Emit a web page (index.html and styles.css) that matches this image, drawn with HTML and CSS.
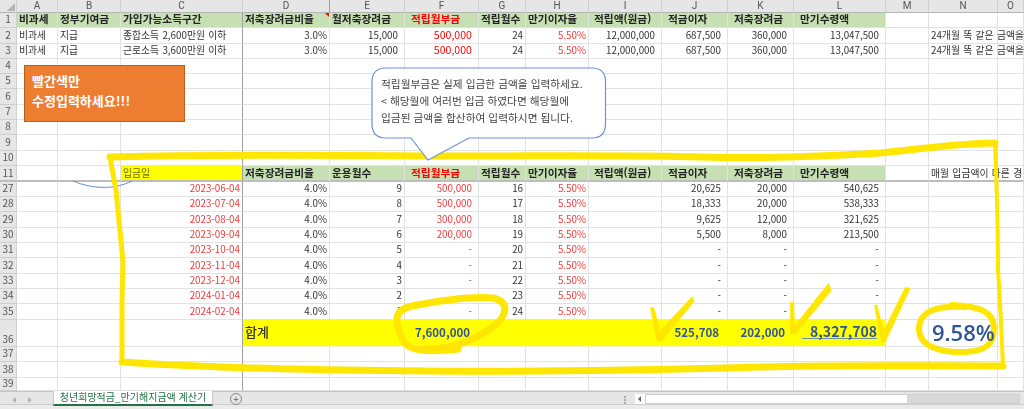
FILE: index.html
```html
<!DOCTYPE html>
<html lang="ko">
<head>
<meta charset="utf-8">
<title>청년희망적금 만기해지금액 계산기</title>
<link rel="stylesheet" href="styles.css">
</head>
<body>
<div class="app">
<div class="sheet">
<table class="grid">
<colgroup><col class="c0"><col class="ca"><col class="cb"><col class="cc"><col class="cd"><col class="ce"><col class="cf"><col class="cg"><col class="ch"><col class="ci"><col class="cj"><col class="ck"><col class="cl"><col class="cm"><col class="cn"><col class="co"></colgroup>
<thead>
<tr class="r13"><th class="corner"><span class="tri"></span></th><th>A</th><th>B</th><th>C</th><th class="fz">D</th><th>E</th><th>F</th><th>G</th><th>H</th><th>I</th><th>J</th><th>K</th><th>L</th><th>M</th><th>N</th><th>O</th></tr>
</thead>
<tbody>
<tr class="r15 g"><th>1</th><td class="h">비과세</td><td class="h">정부기여금</td><td class="h fz">가입가능소득구간</td><td class="h">저축장려금비율<span class="note"></span></td><td class="h">월저축장려금</td><td class="h i7 red">적립월부금</td><td class="h">적립월수</td><td class="h">만기이자율</td><td class="h i6">적립액(원금)</td><td class="h i7">적금이자</td><td class="h i7">저축장려금</td><td class="h i7">만기수령액</td><td class="w"></td><td class="w"></td><td class="w"></td></tr>
<tr class="r16"><th>2</th><td>비과세</td><td>지급</td><td class="fz">종합소득 2,600만원 이하</td><td class="p">3.0%</td><td class="n">15,000</td><td class="n red big">500,000</td><td class="p">24</td><td class="p pink">5.50%</td><td class="n">12,000,000</td><td class="n">687,500</td><td class="n">360,000</td><td class="n">13,047,500</td><td></td><td>24개월 똑 같은 금액을</td><td></td></tr>
<tr class="r15"><th>3</th><td>비과세</td><td>지급</td><td class="fz">근로소득 3,600만원 이하</td><td class="p">3.0%</td><td class="n">15,000</td><td class="n red big">500,000</td><td class="p">24</td><td class="p pink">5.50%</td><td class="n">12,000,000</td><td class="n">687,500</td><td class="n">360,000</td><td class="n">13,047,500</td><td></td><td>24개월 똑 같은 금액을</td><td></td></tr>
<tr class="r15"><th>4</th><td></td><td></td><td class="fz"></td><td></td><td></td><td></td><td></td><td></td><td></td><td></td><td></td><td></td><td></td><td></td><td></td></tr>
<tr class="r15"><th>5</th><td></td><td></td><td class="fz"></td><td></td><td></td><td></td><td></td><td></td><td></td><td></td><td></td><td></td><td></td><td></td><td></td></tr>
<tr class="r16"><th>6</th><td></td><td></td><td class="fz"></td><td></td><td></td><td></td><td></td><td></td><td></td><td></td><td></td><td></td><td></td><td></td><td></td></tr>
<tr class="r15"><th>7</th><td></td><td></td><td class="fz"></td><td></td><td></td><td></td><td></td><td></td><td></td><td></td><td></td><td></td><td></td><td></td><td></td></tr>
<tr class="r15"><th>8</th><td></td><td></td><td class="fz"></td><td></td><td></td><td></td><td></td><td></td><td></td><td></td><td></td><td></td><td></td><td></td><td></td></tr>
<tr class="r16"><th>9</th><td></td><td></td><td class="fz"></td><td></td><td></td><td></td><td></td><td></td><td></td><td></td><td></td><td></td><td></td><td></td><td></td></tr>
<tr class="r15"><th>10</th><td></td><td></td><td class="fz"></td><td></td><td></td><td></td><td></td><td></td><td></td><td></td><td></td><td></td><td></td><td></td><td></td></tr>
<tr class="r16 pane"><th>11</th><td></td><td></td><td class="y fz">입금일</td><td class="h">저축장려금비율</td><td class="h">운용월수</td><td class="h i7 red">적립월부금</td><td class="h">적립월수</td><td class="h">만기이자율</td><td class="h i6">적립액(원금)</td><td class="h i7">적금이자</td><td class="h i7">저축장려금</td><td class="h i7">만기수령액</td><td class="w"></td><td>매월 입금액이 다른 경</td><td></td></tr>
<tr class="r15"><th>27</th><td></td><td></td><td class="p pink fz">2023-06-04</td><td class="p">4.0%</td><td class="p">9</td><td class="n pink">500,000</td><td class="p">16</td><td class="p pink">5.50%</td><td></td><td class="n">20,625</td><td class="n">20,000</td><td class="n">540,625</td><td></td><td></td><td></td></tr>
<tr class="r15"><th>28</th><td></td><td></td><td class="p pink fz">2023-07-04</td><td class="p">4.0%</td><td class="p">8</td><td class="n pink">500,000</td><td class="p">17</td><td class="p pink">5.50%</td><td></td><td class="n">18,333</td><td class="n">20,000</td><td class="n">538,333</td><td></td><td></td><td></td></tr>
<tr class="r16"><th>29</th><td></td><td></td><td class="p pink fz">2023-08-04</td><td class="p">4.0%</td><td class="p">7</td><td class="n pink">300,000</td><td class="p">18</td><td class="p pink">5.50%</td><td></td><td class="n">9,625</td><td class="n">12,000</td><td class="n">321,625</td><td></td><td></td><td></td></tr>
<tr class="r15"><th>30</th><td></td><td></td><td class="p pink fz">2023-09-04</td><td class="p">4.0%</td><td class="p">6</td><td class="n pink">200,000</td><td class="p">19</td><td class="p pink">5.50%</td><td></td><td class="n">5,500</td><td class="n">8,000</td><td class="n">213,500</td><td></td><td></td><td></td></tr>
<tr class="r15"><th>31</th><td></td><td></td><td class="p pink fz">2023-10-04</td><td class="p">4.0%</td><td class="p">5</td><td class="n pink">-</td><td class="p">20</td><td class="p pink">5.50%</td><td></td><td class="n">-</td><td class="n">-</td><td class="n">-</td><td></td><td></td><td></td></tr>
<tr class="r16"><th>32</th><td></td><td></td><td class="p pink fz">2023-11-04</td><td class="p">4.0%</td><td class="p">4</td><td class="n pink">-</td><td class="p">21</td><td class="p pink">5.50%</td><td></td><td class="n">-</td><td class="n">-</td><td class="n">-</td><td></td><td></td><td></td></tr>
<tr class="r15"><th>33</th><td></td><td></td><td class="p pink fz">2023-12-04</td><td class="p">4.0%</td><td class="p">3</td><td class="n pink">-</td><td class="p">22</td><td class="p pink">5.50%</td><td></td><td class="n">-</td><td class="n">-</td><td class="n">-</td><td></td><td></td><td></td></tr>
<tr class="r15"><th>34</th><td></td><td></td><td class="p pink fz">2024-01-04</td><td class="p">4.0%</td><td class="p">2</td><td class="n pink">-</td><td class="p">23</td><td class="p pink">5.50%</td><td></td><td class="n">-</td><td class="n">-</td><td class="n">-</td><td></td><td></td><td></td></tr>
<tr class="r16"><th>35</th><td></td><td></td><td class="p pink fz">2024-02-04</td><td class="p">4.0%</td><td class="p">1</td><td class="n pink">-</td><td class="p">24</td><td class="p pink">5.50%</td><td></td><td class="n">-</td><td class="n">-</td><td class="n">-</td><td></td><td></td><td></td></tr>
<tr class="r27"><th class="low">36</th><td></td><td></td><td class="fz"></td><td class="t total-label">합계</td><td class="t"></td><td class="t total n8">7,600,000</td><td class="t"></td><td class="t"></td><td class="t"></td><td class="t total n8">525,708</td><td class="t total n8">202,000</td><td class="t total n9"><span class="acct">8,327,708</span></td><td></td><td></td><td></td></tr>
<tr class="r15"><th>37</th><td></td><td></td><td class="fz"></td><td></td><td></td><td></td><td></td><td></td><td></td><td></td><td></td><td></td><td></td><td></td><td></td></tr>
<tr class="r16"><th>38</th><td></td><td></td><td class="fz"></td><td></td><td></td><td></td><td></td><td></td><td></td><td></td><td></td><td></td><td></td><td></td><td></td></tr>
<tr class="r13"><th>39</th><td></td><td></td><td class="fz"></td><td></td><td></td><td></td><td></td><td></td><td></td><td></td><td></td><td></td><td></td><td></td><td></td></tr>
</tbody>
</table>

<svg class="ink" width="1024" height="391" viewBox="0 0 1024 391" aria-hidden="true">
<path class="arc" d="M73 181C92 189 114 190 132 181"/>
<path class="pen w5" d="M122 362L122 300L123 262L116 190L110 157"/>
<path class="pen w7" d="M110 157C200 155 330 155 428 156C560 156 640 155 700 157C770 159 830 156 880 153C920 149 960 143 995 143"/>
<path class="pen w4" d="M995 143C997 190 998 240 998 269C1000 300 1002 340 1003 366"/>
<path class="pen w7" d="M1003 366C920 366 840 365 760 367C650 370 540 372 430 371C330 370 230 369 122 362"/>
<path class="pen w7" d="M458 349C430 352 408 352 403 340C394 322 393 310 412 306C440 300 475 296 493 298C510 302 507 315 495 325C485 333 470 341 455 345C445 348 435 349 424 349"/>
<path class="stroke" d="M650.300 308L653.700 307.300L660.300 330.700L692 296.700L694.300 301.300L662 340.700L657 341.300Z"/>
<path class="stroke" d="M790.300 302.300L793.700 302.300L794.700 325.700L828.700 283L831.300 290.700L795.300 334L790.300 334.700Z"/>
<path class="stroke" d="M874.300 305L877 305L883.700 330.700L905.300 287.300L910.300 288.300L885.300 342.300L881.300 342.300Z"/>
<path class="pen w6" d="M965 307C935 305 919 312 919 329C919 346 940 353 965 352C985 351 994 345 994 328C994 312 980 306 952 305"/>
</svg>

<div class="orange">빨간색만<br>수정입력하세요!!!</div>

<div class="callout">
<svg class="callout-shape" width="240" height="96" viewBox="371 67 240 96" aria-hidden="true">
<path d="M386 68H592Q605.500 68 605.500 82V124Q605.500 138 592 138H469L428 160L411 138H386Q372 138 372 124V82Q372 68 386 68Z"/>
</svg>
<p class="callout-text">적립월부금은 실제 입금한 금액을 입력하세요.<br>&lt; 해당월에 여러번 입금 하였다면 해당월에<br>입금된 금액을 합산하여 입력하시면 됩니다.</p>
</div>

<div class="rate">9.58%</div>
</div>

<div class="tabbar">
<div class="tabrow">
<div class="navs"><span class="nav-l"></span><span class="nav-r"></span></div>
<div class="tab">청년희망적금_만기해지금액 계산기</div>
<div class="plus">+</div>
<div class="hscroll"><span class="dots"></span><span class="arrow"></span><span class="thumb"></span></div>
</div>
<div class="status"></div>
</div>
</div>
</body>
</html>
```
FILE: styles.css
```css
* { box-sizing: border-box; }
html, body { margin: 0; padding: 0; background: #fff; }
body { width: 1024px; height: 409px; overflow: hidden; font-family: "Noto Sans CJK KR", "Noto Sans", sans-serif; color: #333; }
.app { display: flex; flex-direction: column; height: 409px; filter: blur(0.35px); }
.sheet { position: relative; height: 391px; overflow: hidden; }

.grid { table-layout: fixed; width: 1024px; border-collapse: separate; border-spacing: 0; font-size: 9.8px; line-height: 12px; word-spacing: 0.6px; }
.c0 { width: 17px; } .ca { width: 41px; } .cb { width: 63px; } .cc { width: 122px; } .cd { width: 87px; }
.ce { width: 75px; } .cf { width: 74px; } .cg { width: 47px; } .ch { width: 63px; } .ci { width: 73px; }
.cj { width: 66px; } .ck { width: 66px; } .cl { width: 92px; } .cm { width: 43px; } .cn { width: 69px; } .co { width: 26px; }

.r13 td, .r13 th { height: 13px; } .r15 td, .r15 th { height: 15px; } .r16 td, .r16 th { height: 16px; } .r27 td, .r27 th { height: 27px; }

th { background: #e6e6e6; font-weight: 400; color: #555; font-size: 10px; line-height: 12px; padding: 0 0 2px; text-align: center; border-right: 1px solid #cfcfcf; border-bottom: 1px solid #cfcfcf; white-space: nowrap; }
td { padding: 0 0 2px 2px; border-right: 1px solid #e2e2e2; border-bottom: 1px solid #e2e2e2; white-space: nowrap; vertical-align: middle; }
thead th { border-bottom: 1px solid #b5b5b5; font-family: Roboto, "Noto Sans", sans-serif; line-height: 12px; padding: 0; }
.r13 td, tbody .r13 th { line-height: 10px; }
.corner { position: relative; }
.tri { position: absolute; right: 1px; bottom: 1px; border-style: solid; border-width: 0 0 8px 8px; border-color: transparent transparent #b4b4b4 transparent; }
th.low { vertical-align: bottom; padding-bottom: 1px; }

.fz { border-right: 1px solid #9f9f9f; }
.pane td, .pane th { border-bottom: 2px solid #bdbdbd; padding-bottom: 1px; }

.h { background: #c6e0b4; font-weight: 700; font-size: 10.7px; color: #222; position: relative; }
.y { background: #ffff00; color: #6b6b00; }
.w { background: #fff; }
.i6 { padding-left: 5px; }
.i7 { padding-left: 6px; }
.red { color: #ff0000; }
.big { font-size: 10.6px; }
.pink { color: #f03a3a; }
.p { text-align: right; padding-left: 0; padding-right: 2px; }
.n { text-align: right; padding-left: 0; padding-right: 6px; }
.n8, .n9 { text-align: right; padding-left: 0; padding-right: 8px; }
.note { position: absolute; top: 0; right: 0; border-style: solid; border-width: 0 4px 4px 0; border-color: transparent #ff0000 transparent transparent; }

.t { background: #ffff00; border-right-color: #ffff00; border-bottom-color: #f2f2d0; }
.total { color: #2f5597; font-weight: 700; font-size: 11.5px; }
.total-label { font-size: 13px; color: #333; font-weight: 500; }
.acct { display: inline-block; min-width: 75px; border-bottom: 1px solid #6f8f9f; line-height: 13px; font-size: 14px; }

.ink { position: absolute; left: 0; top: 0; pointer-events: none; }
.pen { fill: none; stroke: #ffe600; stroke-linecap: round; stroke-linejoin: round; }
.w4 { stroke-width: 4; }
.w5 { stroke-width: 5; }
.w6 { stroke-width: 6; }
.w7 { stroke-width: 7; }
.stroke { fill: #ffe600; stroke: #ffe600; stroke-width: 0.5; }
.arc { fill: none; stroke: #5b8bd0; stroke-width: 1; }

.orange { position: absolute; left: 24px; top: 65px; width: 161px; height: 57px; padding: 5px 0 0 7px; background: #ed7d31; border: 1px solid #b5601f; color: #fff; font-weight: 700; font-size: 13px; line-height: 20px; }

.callout { position: absolute; left: 371px; top: 67px; width: 240px; height: 96px; }
.callout-shape { position: absolute; left: 0; top: 0; }
.callout-shape path { fill: #fff; stroke: #6c94d2; stroke-width: 1.2; }
.callout-text { position: relative; margin: 0; padding: 8px 0 0 10px; font-size: 10.7px; line-height: 17px; color: #444; white-space: nowrap; }

.rate { position: absolute; left: 932px; top: 317px; font-family: "Open Sans", "Noto Sans", sans-serif; font-size: 22px; line-height: 30px; font-weight: 600; color: #2f5597; }

.tabbar { flex: 1; display: flex; flex-direction: column; background: #e6e6e6; border-top: 1px solid #c4c4c4; position: relative; }
.tabrow { height: 12px; display: flex; align-items: flex-start; }
.navs { width: 53px; height: 15px; display: flex; align-items: center; gap: 12px; padding-left: 12px; }
.nav-l { border-style: solid; border-width: 3px 4px 3px 0; border-color: transparent #b5b5b5 transparent transparent; }
.nav-r { border-style: solid; border-width: 3px 0 3px 4px; border-color: transparent transparent transparent #b5b5b5; }
.tab { width: 160px; height: 15px; margin-top: -1px; background: #fff; border: 1px solid #c9c9c9; border-top: 0; border-bottom: 2px solid #217346; color: #217346; font-size: 10px; line-height: 12px; text-align: center; white-space: nowrap; box-sizing: border-box; position: relative; z-index: 1; }
.plus { width: 12px; height: 12px; margin: 1px 0 0 17px; border: 1px solid #8a8a8a; border-radius: 50%; color: #666; font-size: 10px; line-height: 10px; text-align: center; position: relative; z-index: 1; }
.hscroll { margin-left: auto; width: 2px; }
.dots { position: absolute; left: 624px; top: 4px; width: 3px; height: 8px; border-left: 2px dotted #aaa; }
.arrow { position: absolute; left: 635px; top: 2px; width: 10px; height: 10px; background: #fff; }
.arrow::after { content: ""; position: absolute; left: 3px; top: 2px; border-style: solid; border-width: 3px 3px 3px 0; border-color: transparent #666 transparent transparent; }
.thumb { position: absolute; left: 645px; top: 2px; width: 375px; height: 10px; background: linear-gradient(to right, #fff 261px, #d8d8d8 261px); border: 1px solid #cfcfcf; }
.status { margin-top: auto; height: 5px; border-top: 1px solid #cdcdcd; background: #ebebeb; }
```
